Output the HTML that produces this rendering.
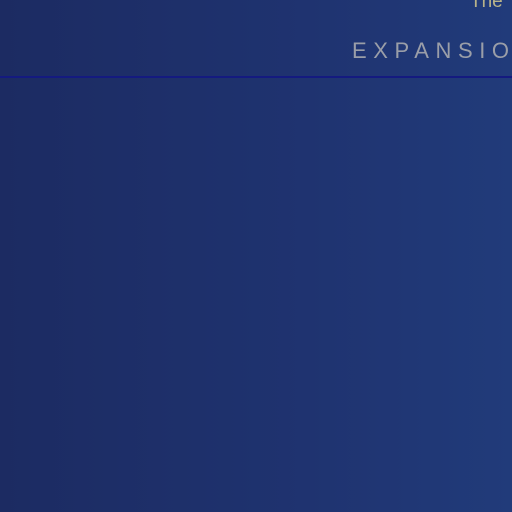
<!DOCTYPE html>
<html><head><meta charset="utf-8"><style>
html,body{margin:0;padding:0;}
body{width:512px;height:512px;overflow:hidden;position:relative;background:linear-gradient(90deg,#1c2b62 0%,#1f3370 60%,#213b7a 100%);font-family:"Liberation Sans",sans-serif;}
.the{position:absolute;left:470px;top:-9px;font-size:19px;color:#b8b38a;white-space:nowrap;}
.exp{position:absolute;left:352px;top:38px;font-size:22px;letter-spacing:6.6px;color:#9a9ea8;white-space:nowrap;}
.line{position:absolute;left:0;top:76px;width:512px;height:2px;background:#141a80;}
</style></head><body>
<div class="the">The</div>
<div class="exp">EXPANSIO</div>
<div class="line"></div>
</body></html>
